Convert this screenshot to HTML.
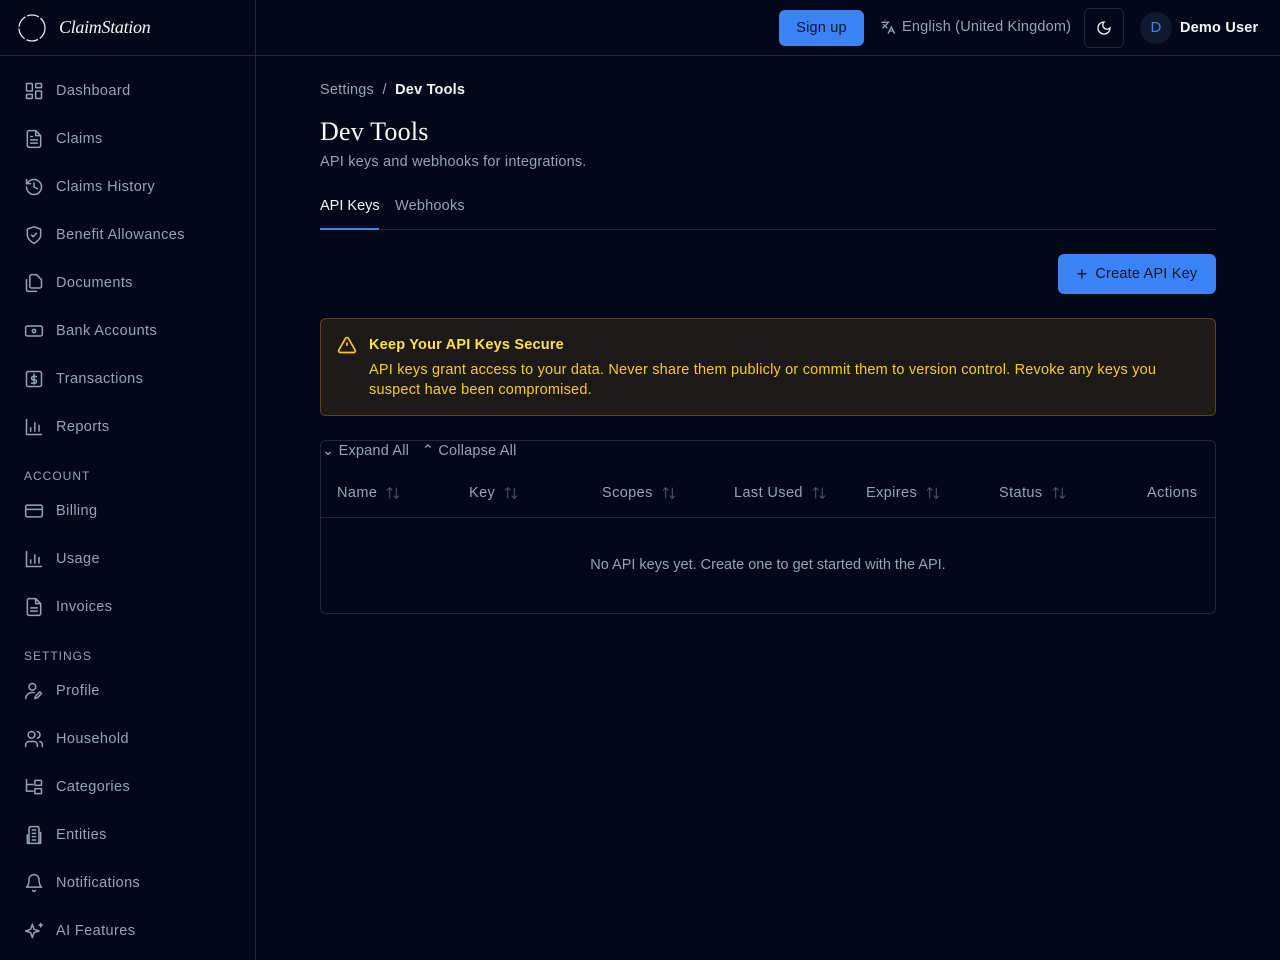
<!DOCTYPE html>
<html><head><meta charset="utf-8"><style>
*{box-sizing:border-box;margin:0;padding:0}
body{width:1280px;height:960px;background:#020817;font-family:"Liberation Sans",sans-serif;color:#e2e8f0;position:relative;overflow:hidden;font-size:14px;letter-spacing:0.2px}
.side{position:absolute;left:0;top:0;width:256px;height:960px;border-right:1px solid #1e293b}
.logo{height:56px;border-bottom:1px solid #1e293b;display:flex;align-items:center;padding-left:17px}
.logo span{font-family:"Liberation Serif",serif;font-style:italic;font-size:18px;color:#f1f5f9;margin-left:12px;letter-spacing:-0.3px}
.nav{position:absolute;left:24px;display:flex;align-items:center;color:#94a3b8;font-size:14.5px;letter-spacing:0.4px;margin-top:1px}
.nav svg{width:20px;height:20px;margin-right:12px;fill:none;stroke:#94a3b8;stroke-width:1.8;stroke-linecap:round;stroke-linejoin:round}
.sec{position:absolute;left:24px;font-size:12px;letter-spacing:1px;color:#94a3b8}
.top{position:absolute;left:256px;right:0;top:0;height:56px;border-bottom:1px solid #1e293b}
.a{position:absolute}
.th{position:absolute;top:485px;font-size:14.5px;color:#94a3b8;display:flex;align-items:center;letter-spacing:0.4px}
.th svg{margin-left:8px;width:16px;height:16px;fill:none;stroke:#475569;stroke-width:1.6}
</style></head><body>
<div class="side">
<div class="logo"><svg width="30" height="30" viewBox="0 0 30 30"><circle cx="15" cy="15" r="13" fill="none" stroke="#e2e8f0" stroke-width="1.3" stroke-dasharray="12 2"/></svg><span>ClaimStation</span></div>
<div class="nav" style="top:80px"><svg viewBox="0 0 24 24"><rect x="3" y="3" width="7" height="9" rx="1"/><rect x="14" y="3" width="7" height="5" rx="1"/><rect x="14" y="12" width="7" height="9" rx="1"/><rect x="3" y="16" width="7" height="5" rx="1"/></svg>Dashboard</div>
<div class="nav" style="top:128px"><svg viewBox="0 0 24 24"><path d="M14 2H6a2 2 0 0 0-2 2v16a2 2 0 0 0 2 2h12a2 2 0 0 0 2-2V8z"/><path d="M14 2v6h6M16 13H8M16 17H8M10 9H8"/></svg>Claims</div>
<div class="nav" style="top:176px"><svg viewBox="0 0 24 24"><path d="M3 12a9 9 0 1 0 9-9 9.75 9.75 0 0 0-6.74 2.74L3 8"/><path d="M3 3v5h5M12 7v5l4 2"/></svg>Claims History</div>
<div class="nav" style="top:224px"><svg viewBox="0 0 24 24"><path d="M12 22s8-4 8-10V5l-8-3-8 3v7c0 6 8 10 8 10z"/><path d="m9 12 2 2 4-4"/></svg>Benefit Allowances</div>
<div class="nav" style="top:272px"><svg viewBox="0 0 24 24"><path d="M15 2H9a2 2 0 0 0-2 2v12a2 2 0 0 0 2 2h10a2 2 0 0 0 2-2V8z"/><path d="M3 8v12a2 2 0 0 0 2 2h10"/></svg>Documents</div>
<div class="nav" style="top:320px"><svg viewBox="0 0 24 24"><rect x="2" y="6" width="20" height="12" rx="2"/><circle cx="12" cy="12" r="2"/></svg>Bank Accounts</div>
<div class="nav" style="top:368px"><svg viewBox="0 0 24 24"><rect x="3" y="3" width="18" height="18" rx="2"/><path d="M12 6v12M15 9h-4a2 2 0 0 0 0 4h2a2 2 0 0 1 0 4H9"/></svg>Transactions</div>
<div class="nav" style="top:416px"><svg viewBox="0 0 24 24"><path d="M3 3v18h18M8 17v-4M13 17V7M18 17v-7"/></svg>Reports</div>
<div class="sec" style="top:469px">ACCOUNT</div>
<div class="nav" style="top:500px"><svg viewBox="0 0 24 24"><rect x="2" y="5" width="20" height="14" rx="2"/><path d="M2 10h20"/></svg>Billing</div>
<div class="nav" style="top:548px"><svg viewBox="0 0 24 24"><path d="M3 3v18h18M8 17v-4M13 17V7M18 17v-7"/></svg>Usage</div>
<div class="nav" style="top:596px"><svg viewBox="0 0 24 24"><path d="M14 2H6a2 2 0 0 0-2 2v16a2 2 0 0 0 2 2h12a2 2 0 0 0 2-2V8z"/><path d="M14 2v6h6M16 13H8M16 17H8"/></svg>Invoices</div>
<div class="sec" style="top:649px">SETTINGS</div>
<div class="nav" style="top:680px"><svg viewBox="0 0 24 24"><circle cx="10" cy="7" r="4"/><path d="M2 21a8 8 0 0 1 10-7M21 15l-5 5-3 1 1-3 5-5z"/></svg>Profile</div>
<div class="nav" style="top:728px"><svg viewBox="0 0 24 24"><circle cx="9" cy="7" r="4"/><path d="M16 21v-2a4 4 0 0 0-4-4H6a4 4 0 0 0-4 4v2M16 3.1a4 4 0 0 1 0 7.8M22 21v-2a4 4 0 0 0-3-3.9"/></svg>Household</div>
<div class="nav" style="top:776px"><svg viewBox="0 0 24 24"><path d="M3 3v14h8M3 9h8"/><rect x="13" y="4" width="8" height="6" rx="1"/><rect x="13" y="14" width="8" height="6" rx="1"/></svg>Categories</div>
<div class="nav" style="top:824px"><svg viewBox="0 0 24 24"><path d="M6 22V4a2 2 0 0 1 2-2h8a2 2 0 0 1 2 2v18zM6 12H4v10h2M18 9h2v13h-2M10 6h4M10 10h4M10 14h4M10 18h4"/></svg>Entities</div>
<div class="nav" style="top:872px"><svg viewBox="0 0 24 24"><path d="M6 8a6 6 0 0 1 12 0c0 7 3 9 3 9H3s3-2 3-9M10.3 21a1.9 1.9 0 0 0 3.4 0"/></svg>Notifications</div>
<div class="nav" style="top:920px"><svg viewBox="0 0 24 24"><path d="M10 4l2 6 6 2-6 2-2 6-2-6-6-2 6-2z"/><path d="M20 3v4M22 5h-4"/></svg>AI Features</div>
</div>
<div class="top"></div>
<div class="a" style="left:779px;top:10px;width:85px;height:36px;background:#3b82f6;border-radius:6px;color:#0f172a;font-size:14.5px;line-height:36px;text-align:center">Sign up</div>
<div class="a" style="left:880px;top:19px;font-size:14.5px;color:#94a3b8;display:flex;align-items:center"><svg width="16" height="16" viewBox="0 0 24 24" fill="none" stroke="#94a3b8" stroke-width="2" style="margin-right:6px"><path d="m5 8 6 6M4 14l6-6 2-3M2 5h12M7 2h1M22 22l-5-10-5 10M14 18h6"/></svg>English (United Kingdom)</div>
<div class="a" style="left:1084px;top:8px;width:40px;height:40px;border:1px solid #1e293b;border-radius:6px;display:flex;align-items:center;justify-content:center"><svg width="16" height="16" viewBox="0 0 24 24" fill="none" stroke="#f1f5f9" stroke-width="2"><path d="M12 3a6 6 0 0 0 9 9 9 9 0 1 1-9-9z"/></svg></div>
<div class="a" style="left:1140px;top:12px;width:32px;height:32px;border-radius:50%;background:#0f1a2e;color:#3b82f6;text-align:center;line-height:32px;font-size:15px">D</div>
<div class="a" style="left:1180px;top:20px;font-size:14.5px;color:#f1f5f9;font-weight:bold">Demo User</div>

<div class="a" style="left:320px;top:82px;font-size:14.5px;color:#94a3b8">Settings &nbsp;/&nbsp; <span style="color:#f1f5f9;font-weight:bold">Dev Tools</span></div>
<div class="a" style="left:320px;top:117px;font-family:'Liberation Serif',serif;font-size:26px;color:#f8fafc">Dev Tools</div>
<div class="a" style="left:320px;top:154px;font-size:14.5px;color:#94a3b8">API keys and webhooks for integrations.</div>
<div class="a" style="left:320px;top:229px;width:896px;height:1px;background:#1e293b"></div>
<div class="a" style="left:320px;top:198px;font-size:14.5px;color:#f1f5f9;letter-spacing:0">API Keys</div>
<div class="a" style="left:320px;top:228px;width:59px;height:2px;background:#3b82f6"></div>
<div class="a" style="left:395px;top:198px;font-size:14.5px;color:#94a3b8">Webhooks</div>
<div class="a" style="left:1058px;top:254px;width:158px;height:40px;background:#3b82f6;border-radius:6px;color:#0f172a;font-size:14.5px;display:flex;align-items:center;justify-content:center"><span style="font-size:18px;margin-right:8px">+</span>Create API Key</div>
<div class="a" style="left:320px;top:318px;width:896px;height:98px;border:1px solid #5c4514;background:#1c1916;border-radius:6px"></div>
<svg class="a" style="left:337px;top:335px" width="20" height="20" viewBox="0 0 24 24" fill="none" stroke="#facc15" stroke-width="2"><path d="m21.7 18-8-14a2 2 0 0 0-3.5 0l-8 14A2 2 0 0 0 4 21h16a2 2 0 0 0 1.7-3zM12 9v4M12 17h.01"/></svg>
<div class="a" style="left:369px;top:337px;font-size:14.5px;color:#fde047;font-weight:bold">Keep Your API Keys Secure</div>
<div class="a" style="left:369px;top:360px;width:800px;font-size:14.5px;line-height:20px;color:#facc15">API keys grant access to your data. Never share them publicly or commit them to version control. Revoke any keys you suspect have been compromised.</div>
<div class="a" style="left:320px;top:440px;width:896px;height:174px;border:1px solid #1e293b;border-radius:6px"></div>
<div class="a" style="left:322px;top:443px;font-size:14.5px;color:#94a3b8">⌄ Expand All &nbsp;&nbsp;⌃ Collapse All</div>
<div class="a" style="left:321px;top:517px;width:894px;height:1px;background:#1e293b"></div>
<div class="th" style="left:337px">Name<svg viewBox="0 0 24 24"><path d="M7 20V4M3 8l4-4 4 4M17 4v16M13 16l4 4 4-4"/></svg></div>
<div class="th" style="left:469px">Key<svg viewBox="0 0 24 24"><path d="M7 20V4M3 8l4-4 4 4M17 4v16M13 16l4 4 4-4"/></svg></div>
<div class="th" style="left:602px">Scopes<svg viewBox="0 0 24 24"><path d="M7 20V4M3 8l4-4 4 4M17 4v16M13 16l4 4 4-4"/></svg></div>
<div class="th" style="left:734px">Last Used<svg viewBox="0 0 24 24"><path d="M7 20V4M3 8l4-4 4 4M17 4v16M13 16l4 4 4-4"/></svg></div>
<div class="th" style="left:866px">Expires<svg viewBox="0 0 24 24"><path d="M7 20V4M3 8l4-4 4 4M17 4v16M13 16l4 4 4-4"/></svg></div>
<div class="th" style="left:999px">Status<svg viewBox="0 0 24 24"><path d="M7 20V4M3 8l4-4 4 4M17 4v16M13 16l4 4 4-4"/></svg></div>
<div class="th" style="left:1147px">Actions</div>
<div class="a" style="left:320px;width:896px;top:557px;text-align:center;font-size:14.5px;color:#94a3b8;letter-spacing:0">No API keys yet. Create one to get started with the API.</div>
</body></html>
